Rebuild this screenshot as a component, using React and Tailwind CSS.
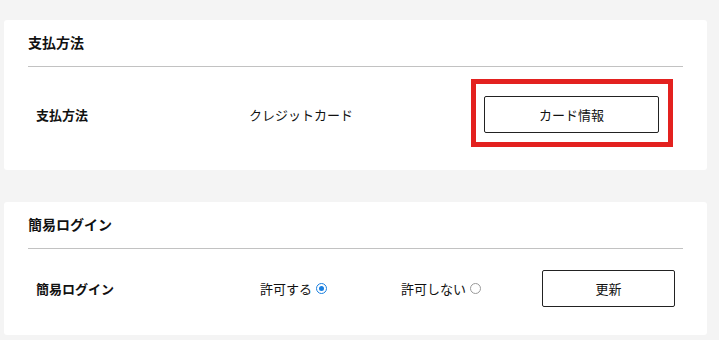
import { useState } from "react";

const font = {
  fontFamily: '"Noto Sans CJK JP", "Noto Sans", sans-serif',
};

function Radio({ checked }) {
  return checked ? (
    <span className="inline-flex w-[11px] h-[11px] rounded-full border border-[#1a7fe0] items-center justify-center ml-[4px]">
      <span className="w-[5px] h-[5px] rounded-full bg-[#1a7fe0]"></span>
    </span>
  ) : (
    <span className="inline-block w-[11px] h-[11px] rounded-full border border-[#9a9a9a] ml-[4px]"></span>
  );
}

function Card({ title, children, className }) {
  return (
    <div className={`relative bg-white rounded-[3px] px-[24px] ${className}`}>
      <div className="h-[47px] pt-[13px] border-b border-[#c2c2c2]">
        <h2 className="text-[14px] leading-[18px] font-bold text-[#111]">
          {title}
        </h2>
      </div>
      {children}
    </div>
  );
}

export default function App() {
  const [allow, setAllow] = useState(true);

  return (
    <div className="min-h-screen bg-[#f4f4f4] pt-[20px] text-[#111]" style={font}>
      <div className="ml-[4px] w-[703px]">
        <Card title="支払方法">
          <div className="flex items-center pt-[29px] pb-[37px] text-[13px]">
            <div className="w-[221px] pl-[8px] font-bold">支払方法</div>
            <div className="w-[235px]">クレジットカード</div>
            <button className="w-[175px] h-[37px] border border-[#222] rounded-[2px] bg-white text-[13px]">
              カード情報
            </button>
          </div>
          {/* highlight frame */}
          <div className="absolute left-[467px] top-[59px] w-[202px] h-[68px] border-[5px] border-[#e3211f] pointer-events-none"></div>
        </Card>

        <Card title="簡易ログイン" className="mt-[32px]">
          <div className="flex items-center pt-[21px] pb-[28px] text-[13px]">
            <div className="w-[232px] pl-[8px] font-bold">簡易ログイン</div>
            <label
              className="w-[141px] flex items-center cursor-pointer"
              onClick={() => setAllow(true)}
            >
              許可する
              <Radio checked={allow} />
            </label>
            <label
              className="w-[141px] flex items-center cursor-pointer"
              onClick={() => setAllow(false)}
            >
              許可しない
              <Radio checked={!allow} />
            </label>
            <button className="w-[133px] h-[37px] border border-[#222] rounded-[2px] bg-white text-[13px]">
              更新
            </button>
          </div>
        </Card>
      </div>
    </div>
  );
}
